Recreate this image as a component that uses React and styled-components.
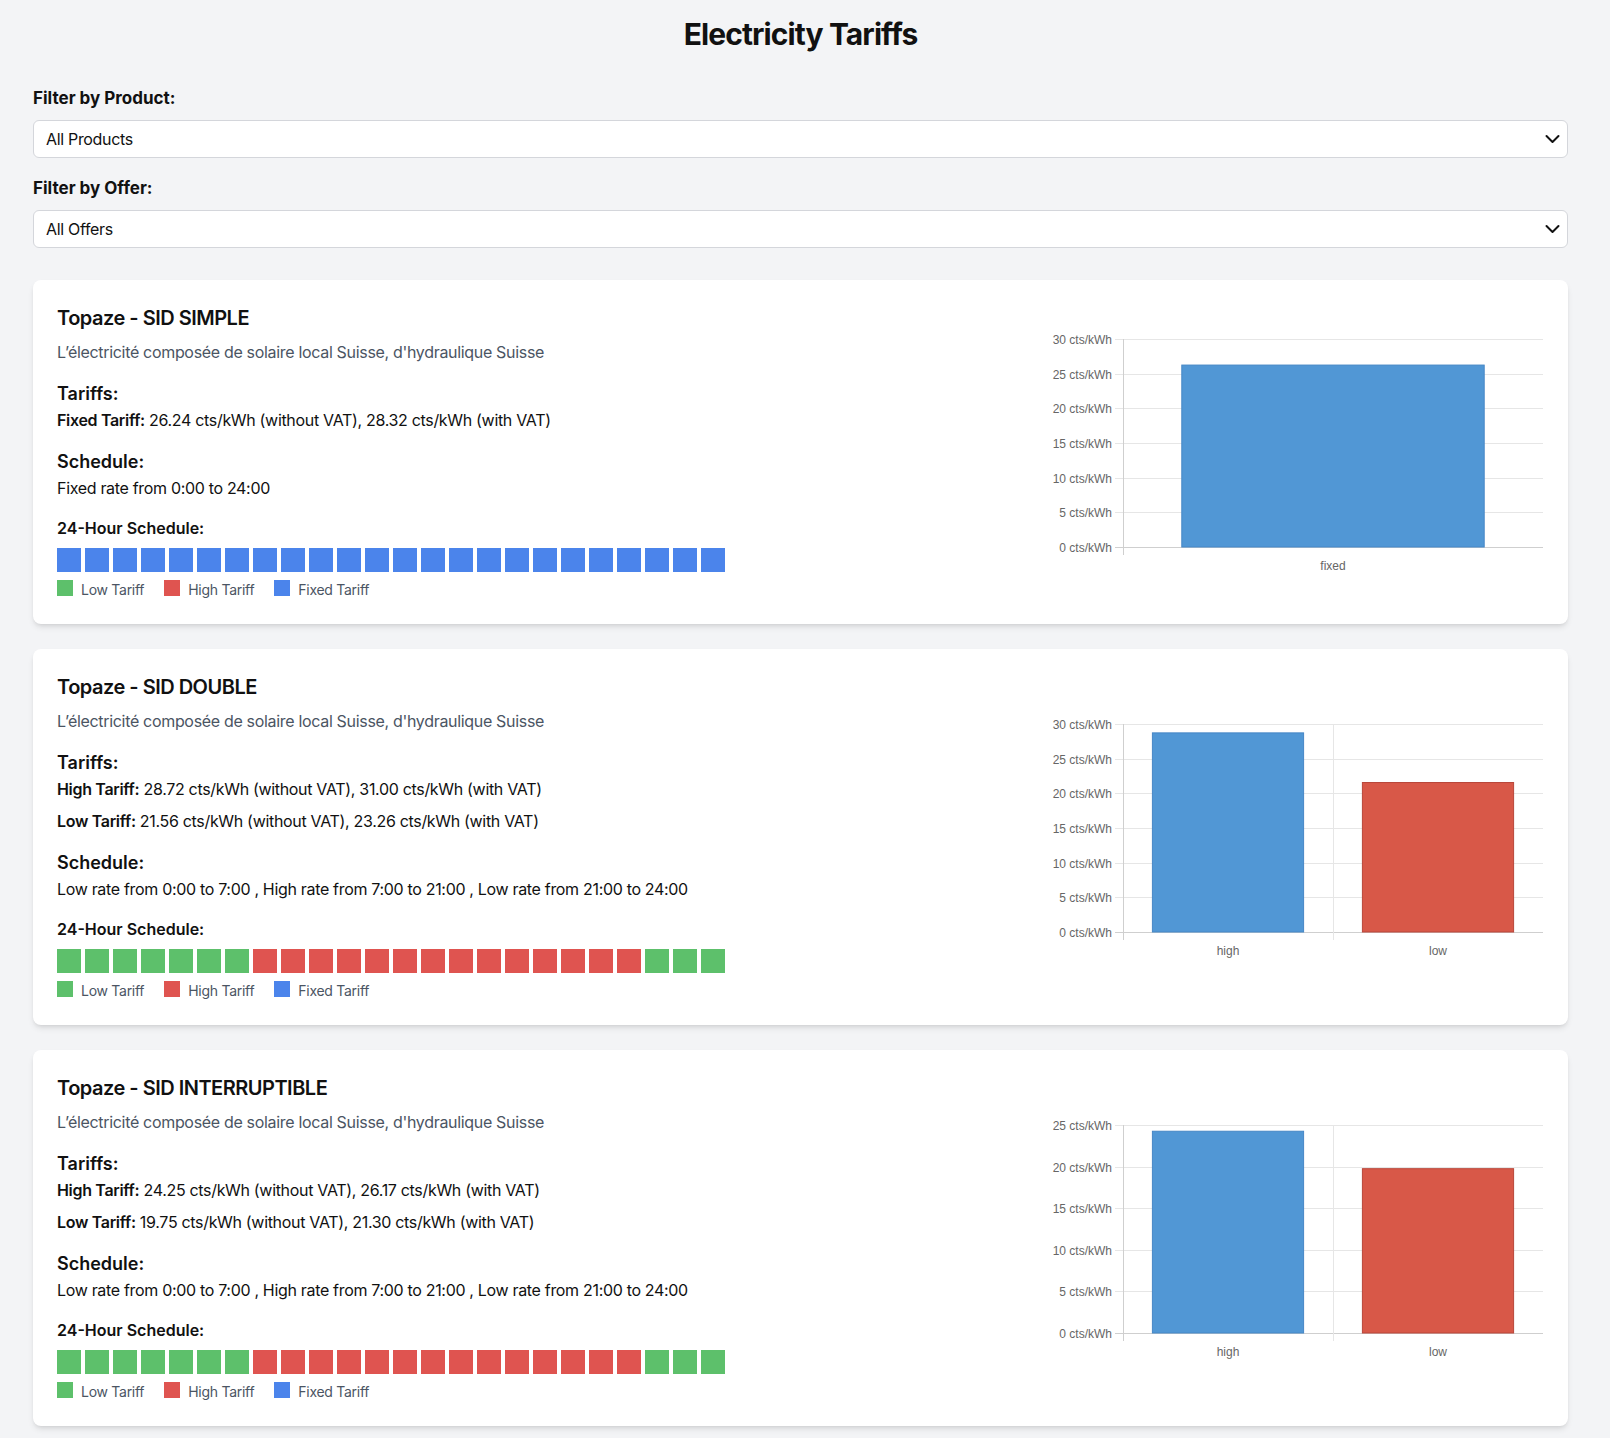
import React from 'react';
import styled, { createGlobalStyle } from 'styled-components';

const GlobalStyle = createGlobalStyle`
  * { box-sizing: border-box; }
  body {
    margin: 0;
    background: #f3f4f6;
    font-family: Inter, "Noto Sans", sans-serif;
    color: #111;
  }
`;

const COLORS = {
  low: '#5dc06b',
  high: '#df5450',
  fixed: '#4b84eb',
};

const BAR_COLORS = {
  high: { fill: '#5197d5', stroke: '#4687c6' },
  fixed: { fill: '#5197d5', stroke: '#4687c6' },
  low: { fill: '#d85848', stroke: '#b9463a' },
};

const DESCRIPTION = "L’électricité composée de solaire local Suisse, d'hydraulique Suisse";

const products = [
  {
    name: 'Topaze - SID SIMPLE',
    max: 30,
    tariffs: [{ key: 'fixed', label: 'Fixed Tariff', net: '26.24', gross: '28.32', value: 26.24 }],
    schedule: [{ type: 'fixed', from: 0, to: 24 }],
  },
  {
    name: 'Topaze - SID DOUBLE',
    max: 30,
    tariffs: [
      { key: 'high', label: 'High Tariff', net: '28.72', gross: '31.00', value: 28.72 },
      { key: 'low', label: 'Low Tariff', net: '21.56', gross: '23.26', value: 21.56 },
    ],
    schedule: [
      { type: 'low', from: 0, to: 7 },
      { type: 'high', from: 7, to: 21 },
      { type: 'low', from: 21, to: 24 },
    ],
  },
  {
    name: 'Topaze - SID INTERRUPTIBLE',
    max: 25,
    tariffs: [
      { key: 'high', label: 'High Tariff', net: '24.25', gross: '26.17', value: 24.25 },
      { key: 'low', label: 'Low Tariff', net: '19.75', gross: '21.30', value: 19.75 },
    ],
    schedule: [
      { type: 'low', from: 0, to: 7 },
      { type: 'high', from: 7, to: 21 },
      { type: 'low', from: 21, to: 24 },
    ],
  },
];

const rateName = { low: 'Low', high: 'High', fixed: 'Fixed' };

// chart geometry
const CHART_W = 500;
const CHART_H = 250;
const PLOT = { left: 79, right: 499, top: 12, bottom: 220 };

const TariffChart = ({ bars, max }) => {
  const ticks = [];
  for (let v = 0; v <= max; v += 5) ticks.push(v);
  const plotH = PLOT.bottom - PLOT.top;
  const y = (v) => PLOT.bottom - (v / max) * plotH;
  const cw = (PLOT.right - PLOT.left) / bars.length;

  return (
    <svg width={CHART_W} height={CHART_H} viewBox={`0 0 ${CHART_W} ${CHART_H}`}>
      {ticks.map((t) => {
        const ty = Math.round(y(t)) + 0.5;
        return (
          <g key={t}>
            <line
              x1={PLOT.left - 8}
              x2={PLOT.right}
              y1={ty}
              y2={ty}
              stroke={t === 0 ? '#cfcfcf' : '#e6e6e6'}
              strokeWidth="1"
            />
            <text
              x={PLOT.left - 11}
              y={ty}
              textAnchor="end"
              dominantBaseline="central"
              fontFamily='"Liberation Sans", Arial, sans-serif'
              fontSize="12"
              fill="#666"
            >
              {t} cts/kWh
            </text>
          </g>
        );
      })}
      {bars.map((b, i) => {
        const gx = Math.round(PLOT.left + i * cw) + 0.5;
        return (
          <line
            key={'g' + i}
            x1={gx}
            x2={gx}
            y1={PLOT.top}
            y2={PLOT.bottom + 8}
            stroke={i === 0 ? '#cfcfcf' : '#e6e6e6'}
            strokeWidth="1"
          />
        );
      })}
      {bars.map((b, i) => {
        const bx = PLOT.left + i * cw + cw * 0.14;
        const bw = cw * 0.72;
        const by = y(b.value);
        const c = BAR_COLORS[b.key];
        return (
          <g key={b.key}>
            <rect
              x={bx}
              y={by}
              width={bw}
              height={PLOT.bottom - by}
              fill={c.fill}
              stroke={c.stroke}
              strokeWidth="1"
            />
            <text
              x={PLOT.left + (i + 0.5) * cw}
              y={PLOT.bottom + 19}
              textAnchor="middle"
              dominantBaseline="central"
              fontFamily='"Liberation Sans", Arial, sans-serif'
              fontSize="12"
              fill="#666"
            >
              {b.key}
            </text>
          </g>
        );
      })}
    </svg>
  );
};

const ChevronIcon = () => (
  <svg width="15" height="9" viewBox="0 0 15 9">
    <polyline points="1.5,1.5 7.5,7.5 13.5,1.5" fill="none" stroke="#111" strokeWidth="2" strokeLinecap="round" strokeLinejoin="round" />
  </svg>
);

const FilterSelect = ({ options }) => (
  <SelectWrap>
    <Select defaultValue={options[0]}>
      {options.map((o) => (
        <option key={o}>{o}</option>
      ))}
    </Select>
    <Chevron>
      <ChevronIcon />
    </Chevron>
  </SelectWrap>
);

const hourTypes = (schedule) => {
  const out = [];
  for (let h = 0; h < 24; h++) {
    const seg = schedule.find((s) => h >= s.from && h < s.to);
    out.push(seg ? seg.type : 'fixed');
  }
  return out;
};

const scheduleText = (schedule) =>
  schedule.map((s) => `${rateName[s.type]} rate from ${s.from}:00 to ${s.to}:00`).join(' , ');

const ProductCard = ({ product }) => (
  <Card>
    <Info>
      <Title>{product.name}</Title>
      <Description>{DESCRIPTION}</Description>
      <Section>
        <SectionTitle>Tariffs:</SectionTitle>
        <TariffList>
          {product.tariffs.map((t) => (
            <TextLine key={t.key}>
              <strong>{t.label}:</strong> {t.net} cts/kWh (without VAT), {t.gross} cts/kWh (with VAT)
            </TextLine>
          ))}
        </TariffList>
      </Section>
      <Section>
        <SectionTitle>Schedule:</SectionTitle>
        <TextLine>{scheduleText(product.schedule)}</TextLine>
      </Section>
      <ScheduleLabel>24-Hour Schedule:</ScheduleLabel>
      <HourRow>
        {hourTypes(product.schedule).map((t, i) => (
          <HourBlock key={i} $type={t} />
        ))}
      </HourRow>
      <Legend>
        <LegendItem>
          <Swatch $type="low" />
          Low Tariff
        </LegendItem>
        <LegendItem>
          <Swatch $type="high" />
          High Tariff
        </LegendItem>
        <LegendItem>
          <Swatch $type="fixed" />
          Fixed Tariff
        </LegendItem>
      </Legend>
    </Info>
    <ChartBox>
      <TariffChart bars={product.tariffs} max={product.max} />
    </ChartBox>
  </Card>
);

const App = () => {
  return (
    <Page>
      <GlobalStyle />
      <Heading>Electricity Tariffs</Heading>
      <FilterGroup>
        <FilterLabel>Filter by Product:</FilterLabel>
        <FilterSelect options={['All Products', 'Topaze']} />
      </FilterGroup>
      <FilterGroup>
        <FilterLabel>Filter by Offer:</FilterLabel>
        <FilterSelect options={['All Offers', 'SID SIMPLE', 'SID DOUBLE', 'SID INTERRUPTIBLE']} />
      </FilterGroup>
      <CardList>
        {products.map((p) => (
          <ProductCard key={p.name} product={p} />
        ))}
      </CardList>
    </Page>
  );
};

const Page = styled.div`
  padding: 16px 42px 40px 33px;
`;

const Heading = styled.h1`
  margin: 0 0 34px;
  font-size: 30px;
  line-height: 36px;
  font-weight: 700;
  letter-spacing: -0.03em;
  text-align: center;
`;

const FilterGroup = styled.div`
  display: flex;
  flex-direction: column;
  margin-bottom: 18px;
`;

const FilterLabel = styled.label`
  font-size: 17px;
  line-height: 24px;
  font-weight: 700;
  margin-bottom: 10px;
`;

const SelectWrap = styled.div`
  position: relative;
`;

const Select = styled.select`
  width: 100%;
  height: 38px;
  padding: 0 40px 0 12px;
  appearance: none;
  background: #fff;
  border: 1px solid #d4d6db;
  border-radius: 6px;
  font-family: Inter, "Noto Sans", sans-serif;
  font-size: 16px;
  letter-spacing: -0.02em;
  color: #111;
  outline: none;
`;

const Chevron = styled.span`
  position: absolute;
  right: 8px;
  top: 50%;
  transform: translateY(-50%);
  display: flex;
  pointer-events: none;
`;

const CardList = styled.div`
  display: flex;
  flex-direction: column;
  gap: 25px;
  margin-top: 32px;
`;

const Card = styled.div`
  display: flex;
  align-items: center;
  gap: 24px;
  padding: 24px;
  background: #fff;
  border-radius: 8px;
  box-shadow: 0 4px 6px -1px rgba(0, 0, 0, 0.1), 0 2px 4px -2px rgba(0, 0, 0, 0.1);
`;

const Info = styled.div`
  flex: 1;
  min-width: 0;
`;

const ChartBox = styled.div`
  flex-shrink: 0;
  width: ${CHART_W}px;
  height: ${CHART_H}px;
  display: flex;
`;

const Title = styled.h2`
  margin: 0 0 8px;
  font-size: 20px;
  line-height: 28px;
  font-weight: 600;
  letter-spacing: -0.025em;
`;

const Description = styled.p`
  margin: 0 0 16px;
  font-size: 16px;
  line-height: 24px;
  letter-spacing: -0.02em;
  color: #4b5563;
`;

const Section = styled.div`
  margin-bottom: 16px;
`;

const SectionTitle = styled.h3`
  margin: 0;
  font-size: 18px;
  line-height: 28px;
  font-weight: 600;
`;

const TariffList = styled.div`
  display: flex;
  flex-direction: column;
  gap: 8px;
`;

const TextLine = styled.p`
  margin: 0;
  font-size: 16px;
  line-height: 24px;
  letter-spacing: -0.02em;

  strong {
    font-weight: 600;
  }
`;

const ScheduleLabel = styled.h4`
  margin: 0 0 8px;
  font-size: 16px;
  line-height: 24px;
  font-weight: 600;
`;

const HourRow = styled.div`
  display: flex;
  gap: 4px;
`;

const HourBlock = styled.div`
  width: 24px;
  height: 24px;
  background: ${(p) => COLORS[p.$type]};
`;

const Legend = styled.div`
  display: flex;
  gap: 20px;
  margin-top: 8px;
`;

const LegendItem = styled.div`
  display: flex;
  align-items: flex-start;
  font-size: 14px;
  line-height: 20px;
  letter-spacing: -0.02em;
  color: #4b5563;
`;

const Swatch = styled.span`
  width: 16px;
  height: 16px;
  margin-right: 8px;
  background: ${(p) => COLORS[p.$type]};
`;

export default App;
